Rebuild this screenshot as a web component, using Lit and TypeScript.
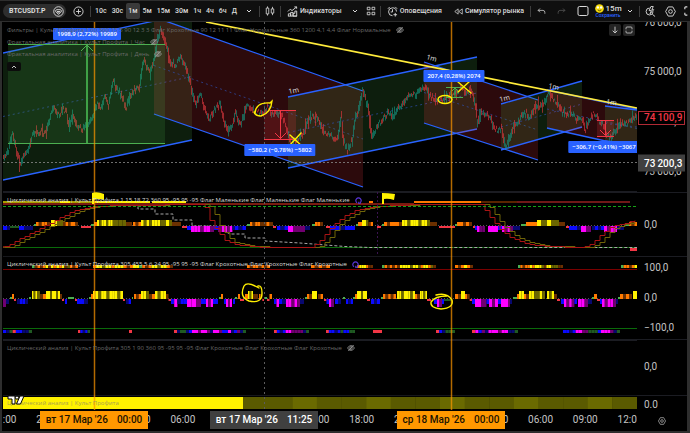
import { LitElement, html, css, svg, nothing } from "lit";
import { customElement } from "lit/decorators.js";

/* ---------- plot space: x 3..637, y 22..410 ---------- */
const X0 = 3, Y0 = 22, W = 634, H = 388;
const left = (x: number) => `${((x - X0) / W) * 100}%`;
const top = (y: number) => `${((y - Y0) / H) * 100}%`;

type Pt = [number, number];

const COLORS: Record<string, string> = {
  y: "#fff200", l: "#6b6600", o: "#ff7a00", w: "#6b3000", g: "#4caf50", d: "#1f5a22",
  r: "#f23645", b: "#0a0aff", n: "#080870", m: "#ff00ff", p: "#700070",
};

const PRICE: Pt[] = [[3,158],[8,150],[12,134],[16,150],[20,165],[23,156],[27,153],[32,135],[36,132],[42,132],[46,134],[50,115],[54,108],[58,115],[62,110],[66,110],[68,125],[73,115],[77,126],[82,130],[88,124],[93,115],[97,103],[101,108],[104,95],[108,105],[113,82],[117,90],[121,95],[126,108],[130,95],[134,90],[139,88],[143,60],[146,66],[150,72],[154,60],[157,40],[160,28],[163,35],[166,45],[170,62],[176,65],[180,57],[185,65],[189,80],[192,92],[195,105],[200,95],[205,110],[209,118],[215,108],[220,104],[224,125],[228,130],[232,125],[235,113],[240,125],[247,105],[250,106],[255,112],[263,113],[267,107],[273,115],[280,112],[285,125],[290,140],[296,140],[302,135],[307,122],[313,115],[318,120],[322,130],[330,135],[337,140],[341,117],[343,140],[347,150],[352,140],[355,118],[358,110],[362,90],[367,105],[372,138],[377,125],[382,120],[388,112],[393,115],[397,108],[403,104],[408,95],[415,95],[420,88],[425,87],[430,96],[435,100],[443,100],[450,94],[456,92],[462,87],[466,94],[470,90],[473,98],[476,112],[477,125],[481,112],[486,114],[490,116],[493,128],[497,130],[501,128],[503,140],[505,148],[510,138],[513,125],[517,125],[522,115],[526,113],[530,118],[533,110],[537,105],[542,108],[546,97],[549,94],[553,100],[557,102],[562,112],[567,114],[572,113],[577,120],[582,118],[585,130],[588,120],[593,114],[598,120],[603,125],[606,135],[611,138],[615,130],[620,122],[625,125],[630,120],[636,117]];

const RED_WAVE: Pt[] = [[3,247],[8,245],[20,238],[40,228],[60,217],[75,210],[93,206],[120,205],[200,204],[206,208],[210,220],[218,232],[226,241],[240,245],[265,247],[312,247],[322,238],[332,225],[345,215],[358,209],[375,206],[420,204],[480,204],[487,212],[492,220],[500,229],[510,237],[525,243],[545,246],[583,247],[592,243],[600,235],[608,228],[618,224],[637,220]];

function at(points: Pt[], x: number): number {
  if (x <= points[0][0]) return points[0][1];
  for (let i = 1; i < points.length; i++) {
    const [x1, y1] = points[i];
    if (x <= x1) {
      const [x0, y0] = points[i - 1];
      return y0 + ((y1 - y0) * (x - x0)) / (x1 - x0);
    }
  }
  return points[points.length - 1][1];
}

function noise(n: number): number {
  const v = Math.sin(n * 127.1 + 11.7) * 43758.5453;
  return v - Math.floor(v);
}

/* Wicks of the falling and of the rising candles, one path for each. */
function candles(rising: boolean): string {
  let d = "";
  for (let x = 3; x < 637; x++) {
    const trend = at(PRICE, x + 1) - at(PRICE, x - 1);
    const up = noise(x) > 0.5 + trend * 0.04;
    if (up !== rising) continue;
    const mid = at(PRICE, x) + (noise(x * 3) - 0.5) * 5;
    const half = 0.8 + noise(x * 7) * 2 + Math.abs(trend) * 0.25 + (noise(x * 5) > 0.94 ? 4 : 0);
    d += `M${x + 0.5} ${(mid - half).toFixed(1)}V${(mid + half).toFixed(1)}`;
  }
  return d;
}

function stairs(points: Pt[], lag: number): string {
  let d = `M3 ${at(points, 3 - lag)}`;
  for (let x = 5; x <= 637; x += 5) d += `H${x}V${Math.round(at(points, x - lag)) + 0.5}`;
  return d;
}

type Band = [number, number, string];

const FAST: Band[] = [[3,7,"b"],[7,10,"n"],[10,19,"d"],[19,24,"b"],[24,33,"n"],[34,36,"g"],[36,50,"owoow"],[51,59,"yyyl"],[59,63,"l"],[63,78,"wowoow"],[81,91,"r"],[91,94,"g"],[94,97,"o"],[97,115,"ylyylyyl"],[115,126,"lll"],[126,132,"w"],[133,141,"owo"],[141,163,"ylylyyyl"],[163,172,"lyl"],[172,181,"www"],[182,187,"r"],[187,191,"b"],[191,210,"mmmpmm"],[210,222,"pbp"],[222,235,"mmpmn"],[235,246,"bnb"],[247,250,"g"],[250,263,"owoow"],[263,273,"wow"],[273,276,"r"],[277,288,"bnb"],[288,293,"m"],[293,305,"p"],[305,310,"n"],[312,315,"g"],[315,323,"oow"],[326,330,"r"],[330,355,"bbnbb"],[356,358,"g"],[358,362,"o"],[362,366,"y"],[366,373,"lwo"],[377,381,"r"],[382,384,"g"],[384,402,"owooow"],[402,427,"yylyyylyy"],[427,430,"l"],[430,437,"w"],[439,455,"r"],[455,457,"g"],[457,472,"oowow"],[473,475,"r"],[475,477,"b"],[477,485,"mpp"],[488,498,"m"],[498,502,"b"],[502,513,"mpmp"],[513,520,"n"],[521,526,"g"],[526,537,"o"],[537,541,"y"],[541,547,"l"],[547,551,"y"],[551,559,"l"],[559,565,"w"],[566,569,"r"],[569,581,"bbn"],[581,586,"m"],[586,591,"p"],[592,604,"nbnb"],[604,617,"mpmm"],[617,624,"n"],[625,629,"g"],[629,637,"owo"]];

const SLOW: Band[] = [[3,9,"pn"],[10,12,"g"],[12,16,"or"],[17,28,"nbbn"],[29,31,"g"],[32,37,"yly"],[37,46,"lwo"],[46,60,"yylyyly"],[60,64,"wr"],[65,67,"b"],[68,74,"g"],[75,77,"r"],[77,84,"b"],[84,88,"n"],[89,91,"g"],[91,93,"o"],[93,123,"yylyylyyyly"],[123,125,"r"],[126,131,"nb"],[132,133,"g"],[134,141,"owo"],[141,149,"yyl"],[149,155,"wo"],[155,166,"ylyy"],[166,171,"wr"],[171,187,"bmnbb"],[187,196,"mm"],[196,201,"p"],[201,206,"b"],[206,213,"mpm"],[213,218,"b"],[219,221,"g"],[221,223,"o"],[224,232,"bmpm"],[233,235,"b"],[235,237,"g"],[238,240,"o"],[240,244,"r"],[245,248,"o"],[248,253,"yly"],[253,258,"w"],[259,264,"owr"],[265,267,"g"],[267,272,"ro"],[274,279,"bm"],[279,286,"bn"],[286,300,"mmpmp"],[300,304,"n"],[305,307,"g"],[307,312,"ow"],[312,317,"y"],[318,323,"wo"],[324,329,"rb"],[329,334,"mp"],[335,341,"bn"],[343,345,"g"],[346,353,"bnb"],[353,355,"g"],[355,357,"o"],[357,367,"yylyy"],[367,370,"r"],[371,380,"bnb"],[381,383,"g"],[383,396,"owowo"],[397,415,"yylyyyly"],[415,420,"ow"],[420,427,"yyly"],[427,431,"r"],[434,437,"b"],[437,442,"mp"],[442,444,"b"],[444,452,"d"],[455,461,"ow"],[461,465,"y"],[465,472,"owr"],[472,484,"bmmp"],[484,489,"pb"],[489,498,"mpm"],[498,501,"b"],[501,508,"m"],[508,512,"pn"],[513,517,"g"],[517,519,"o"],[519,529,"yyow"],[529,545,"yyllyl"],[547,554,"yly"],[554,560,"wr"],[561,564,"b"],[564,577,"mpmpb"],[578,588,"mmp"],[588,592,"n"],[592,594,"g"],[594,597,"o"],[597,600,"r"],[600,602,"b"],[602,616,"mpmmp"],[616,618,"n"],[618,620,"g"],[620,632,"owow"],[633,637,"y"]];

const HIGH: Band[] = [[32,78,"gwowoywyoyoywlowo"],[93,173,"oyylyyoyyyowoyygowoyylyyow"],[247,270,"owoowowo"],[311,330,"owowo"],[357,373,"oyyyoww"],[382,436,"gowowowyyyylyyloyyolw"],[455,473,"owoyow"],[518,563,"gowooyoyyylwyylllww"],[621,637,"goowoy"]];
const LOW: Band[] = [[3,32,"bndrbbnnd"],[78,90,"rbnbd"],[129,132,"r"],[174,246,"rnddnbmmpmmpnmmpbbmnbpnd"],[274,309,"rbnbmmppppnd"],[326,355,"rbbnbdbbdd"],[373,382,"r"],[436,455,"rbnddd"],[472,518,"rmbpnmmmpmmnnd"],[563,620,"bbnbmmppdddbmmmpnd"]];

const STEP: Record<string, number> = { y: 3, l: 3, o: 2, w: 2, g: 1, d: -1, r: -1, b: -2, n: -2, m: -3, p: -3 };

function bars(bands: Band[], base: number, size: (code: string) => number) {
  return bands.map(([a, b, codes]) =>
    [...codes].map((c, i) => {
      const w = (b - a) / codes.length;
      const h = size(c);
      return svg`<rect x=${a + i * w} y=${h > 0 ? base - h : base} width=${w} height=${Math.abs(h)} fill=${COLORS[c]}></rect>`;
    }));
}

/* x from, x to, upper y at both ends, lower y at both ends */
const CHANNELS: [number, number, number, number, number, number, string][] = [
  [3, 192, 53, 13, 180, 140, "up"],
  [154, 363, 17, 91, 114, 187, "down"],
  [288, 477, 97, 57, 168, 129, "up"],
  [424, 538, 62, 100, 123, 160, "down"],
  [501, 582, 104, 81, 150, 127, "up"],
  [547, 637, 90, 109, 128, 148, "down"],
  [605, 637, 106, 110, 141, 144, "up"],
];

const MARKS: [number, number, number][] = [[289, 94, -12], [426, 59, 16], [500, 102, -14], [548, 88, 12], [606, 104, 8]];

const BADGES = [
  { x: 87, y: 34, text: "1998,9 (2,72%) 19989" },
  { x: 280, y: 150, text: "−580,2 (−0,78%) −5802" },
  { x: 454, y: 76, text: "207,4 (0,28%) 2074" },
  { x: 604, y: 147, text: "−306,7 (−0,41%) −3067" },
];

const HOURS = ["18:00", "21:00", "00:00", "03:00", "06:00", "09:00", "12:00", "15:00", "18:00", "21:00", "00:00", "03:00", "06:00", "09:00", "12:00"];
const DATES = [
  { x: 94, day: "вт 17 Мар '26", time: "00:00", kind: "event" },
  { x: 264, day: "вт 17 Мар '26", time: "11:25", kind: "cursor" },
  { x: 451, day: "ср 18 Мар '26", time: "00:00", kind: "event" },
];

const PRICES: [number, string][] = [[23, "76\u2009000,0"], [72, "75\u2009000,0"], [122, "74\u2009000,0"], [172, "73\u2009000,0"]];
const LEVELS: [number, string][] = [[225, "0,0"], [268, "100,0"], [298, "0,0"], [328, "−100,0"], [367, "0,0"], [405, "0.0"]];

const TIMEFRAMES = ["10с", "30с", "1м", "5м", "15м", "30м", "1ч", "4ч", "6ч", "Д"];

/* ---------- icons ---------- */
const icon = (w: number, body: unknown) => html`<svg class="icon" width=${w} height=${w} viewBox="0 0 12 12" aria-hidden="true">${body}</svg>`;
const ICONS = {
  gem: icon(11, svg`<circle cx="6" cy="6" r="5.2"></circle><path d="M3.8 4h4.4l1.2 1.6L6 9.2 2.6 5.6z"></path><path d="M4.4 6h3.2L6 7.6z"></path>`),
  plus: icon(11, svg`<circle cx="6" cy="6" r="5"></circle><path d="M6 3.4v5.2M3.4 6h5.2"></path>`),
  chevron: icon(6, svg`<path stroke-width="2" d="M2 4l4 4 4-4"></path>`),
  candles: icon(10, svg`<path d="M3 .5v2M3 9.5v2M1.5 2.5h3v7h-3zM9 1v2.5M9 8.5V11M7.5 3.5h3v5h-3z"></path>`),
  indicators: icon(11, svg`<path d="M1 6l2.5-2.5 2 1.5 5-4M8 1h2.5v2M1.5 11V8.5H4V11M4 11V7h2.6v4M6.6 11V8h2V5.5h2V11zM1 11h10"></path>`),
  grid: icon(10, svg`<path d="M1.5 1.5h3.3v3H1.5zM7.2 1.5h3.3v3H7.2zM1.5 7.5h3.3v3H1.5zM7.2 7.5h3.3v3H7.2z"></path>`),
  alarm: icon(11, svg`<path d="M10.3 6A4.3 4.3 0 1 0 6 10.6M6 3.5v3H4M1 3l2-2M9 1l2 2M9 7.5v4M7 9.5h4"></path>`),
  rewind: icon(9, svg`<path d="M5.5 2.5v7L1 6zM11 2.5v7L6.5 6z"></path>`),
  undo: icon(9, svg`<path d="M4 2L1.5 4.5 4 7M1.5 4.5H8q2.5 0 2.5 3V9"></path>`),
  redo: icon(9, svg`<path d="M8 2l2.5 2.5L8 7M10.5 4.5H4q-2.5 0-2.5 3V9"></path>`),
  frame: icon(12, svg`<rect x="1" y="1.5" width="10" height="9" rx="1.5"></rect>`),
  search: icon(11, svg`<path d="M5 2.2A3.8 3.8 0 1 0 8.8 6M8 9l3 2.5M6.5.5l-2 4.5H7L5.5 8.500 9.500 4h-2L9 .5z"></path>`),
  hex: icon(11, svg`<path d="M3.5 1h5l2.8 5-2.8 5h-5L.7 6z"></path><circle cx="6" cy="6" r="2"></circle>`),
  full: icon(10, svg`<path stroke-width="1.4" d="M1 4V2q0-1 1-1h2M8 1h2q1 0 1 1v2M11 8v2q0 1-1 1H8M4 11H2q-1 0-1-1V8"></path>`),
  eye: icon(8, svg`<path stroke-width="1.3" d="M.7 6Q6-1 11.3 6 6 13 .7 6zM2 10.5l8-9"></path><circle cx="6" cy="6" r="2"></circle>`),
  sync: icon(7, svg`<path stroke-width="2" d="M3.5 10a4.6 4.6 0 1 1 5 0M6.5 8v3.5H10"></path>`),
  down: icon(8, svg`<path stroke-width="1.5" d="M6 1v9M2.5 7L6 10.5 9.500 7"></path>`),
  expand: icon(8, svg`<path stroke-width="1.3" d="M1.5 5V3q0-1.5 1.5-1.5h6q1.5 0 1.5 1.5v2M1.5 7v2q0 1.5 1.5 1.5h6q1.5 0 1.5-1.5V7"></path>`),
  up: icon(6, svg`<path stroke-width="2" d="M2 8l4-4 4 4"></path>`),
};

@customElement("trade-toolbar")
export class TradeToolbar extends LitElement {
  static styles = css`
    :host { display: flex; align-items: center; justify-content: space-between; height: 20px; background: #0f0f0f; color: #dbdbdb; overflow: hidden; }
    .group { display: flex; align-items: center; flex: none; }
    .right { margin-right: -4px; }
    button { display: inline-flex; align-items: center; justify-content: center; gap: 2px; margin: 0; padding: 0; border: 0; background: none; color: inherit; font: 500 7px/16px Roboto, "Noto Sans", sans-serif; white-space: nowrap; }
    .icon { display: block; flex: none; fill: none; stroke: currentColor; stroke-width: 1; }
    .symbol { width: 63px; height: 14px; margin-left: 3px; padding: 0 2px 0 6px; box-sizing: border-box; border-radius: 7px; background: #2e2e2e; justify-content: space-between; font-weight: 700; }
    .wide { width: 24px; }
    .square { width: 20px; }
    .tight { width: 18px; }
    .narrow { width: 14px; }
    .sep { width: 1px; height: 11px; background: #3d3d3d; }
    .frames { display: flex; gap: 1px; margin-left: 2px; }
    .frames button { padding: 0 2px; border-radius: 2px; }
    .frames .on { background: #3a3a3a; }
    .label { padding: 0 6px; }
    .dim { color: #5a5a5a; }
    .face { width: 9px; height: 9px; }
    .layout { display: grid; grid-template-columns: auto auto; justify-content: center; align-items: center; gap: 0 2px; width: 26px; font-size: 8px; line-height: 9px; }
    .save { grid-column: 1 / -1; font-size: 5px; line-height: 5px; color: #2962ff; }
  `;

  render() {
    return html`
      <div class="group">
        <button class="symbol"><span>BTCUSDT.P</span>${ICONS.gem}</button>
        <button class="wide" aria-label="Добавить">${ICONS.plus}</button>
        <span class="sep"></span>
        <div class="frames">${TIMEFRAMES.map((t) => html`<button class=${t === "1м" ? "on" : ""}>${t}</button>`)}</div>
        <button class="square" aria-label="Интервалы">${ICONS.chevron}</button>
        <span class="sep"></span>
        <button class="square" aria-label="Свечи">${ICONS.candles}</button>
        <span class="sep"></span>
        <button class="label">${ICONS.indicators}<span>Индикаторы</span></button>
        <button class="narrow" aria-label="Избранные индикаторы">${ICONS.chevron}</button>
        <button class="tight" aria-label="Шаблоны">${ICONS.grid}</button>
        <span class="sep"></span>
        <button class="label">${ICONS.alarm}<span>Оповещения</span></button>
        <button class="label">${ICONS.rewind}<span>Симулятор рынка</span></button>
      </div>
      <div class="group right">
        <span class="sep"></span>
        <button class="square" aria-label="Отменить">${ICONS.undo}</button>
        <button class="square dim" aria-label="Повторить">${ICONS.redo}</button>
        <button class="wide" aria-label="Макет">${ICONS.frame}</button>
        <button class="layout">
          <svg class="face" viewBox="0 0 10 10" aria-hidden="true"><circle cx="5" cy="5" r="4.8" fill="#f5d90a"></circle><circle cx="3.2" cy="3.8" r="1.3" fill="#fff"></circle><circle cx="6.8" cy="3.8" r="1.3" fill="#fff"></circle><path d="M3 6.5q2 2 4 0" stroke="#5a4a00" fill="none"></path></svg>
          <span>15m</span><span class="save">Сохранить</span>
        </button>
        <button class="tight" aria-label="Список макетов">${ICONS.chevron}</button>
        <span class="sep"></span>
        <button class="square" aria-label="Быстрый поиск">${ICONS.search}</button>
        <button class="square" aria-label="Настройки">${ICONS.hex}</button>
        <button class="tight" aria-label="Во весь экран">${ICONS.full}</button>
      </div>`;
  }
}

@customElement("trade-plot")
export class TradePlot extends LitElement {
  static styles = css`
    :host { display: block; position: relative; overflow: hidden; }
    .canvas { display: block; width: 100%; height: 100%; }
    .up { fill: #4caf50; fill-opacity: 0.17; }
    .down { fill: #f23645; fill-opacity: 0.18; }
    .edge { stroke: #2962ff; stroke-width: 1.3; }
    .mid { stroke: #2f4fae; stroke-width: 1; stroke-dasharray: 2 3; opacity: 0.7; }
    .line { fill: none; stroke-width: 1; }
    .thick { fill: none; stroke-width: 2; }
    .rise { stroke: #17937f; stroke-width: 0.8; opacity: 0.8; }
    .fall { stroke: #e0383f; stroke-width: 0.8; opacity: 0.8; }
    .session { stroke: #ff9800; stroke-width: 1.5; opacity: 0.7; }
    .cross { stroke: #8a8a8a; stroke-dasharray: 2 2; opacity: 0.8; }
    .cross-v { stroke: #5c5c5c; stroke-dasharray: 2 3; }
    .pen { fill: none; stroke: #ffee00; stroke-width: 1.4; stroke-linecap: round; }
    .mark { fill: #e0e0e0; font: 7px "Open Sans", "Noto Sans", sans-serif; }
    .badge { position: absolute; transform: translate(-50%, -50%); padding: 0 4px; border-radius: 1px; background: #2962ff; color: #fff; font: 600 6px/12px "Open Sans", "Noto Sans", sans-serif; white-space: nowrap; }
  `;

  private channels() {
    return CHANNELS.map(([a, b, u0, u1, l0, l1, kind]) => svg`
      <path class=${kind} d="M${a} ${u0}L${b} ${u1}V${l1}L${a} ${l0}z"></path>
      <path class="mid" d="M${a} ${(u0 + l0) / 2}L${b} ${(u1 + l1) / 2}"></path>
      <path class="edge" d="M${a} ${u0}L${b} ${u1}M${a} ${l0}L${b} ${l1}"></path>`);
  }

  private measures() {
    return svg`
      <rect class="up" x="8" y="44" width="157" height="100"></rect>
      <path class="line" stroke="#4caf50" d="M8 44.5H165M8 143.5H165"></path>
      <path class="thick" stroke="#3fa046" d="M87 45V143"></path>
      <path class="line" stroke="#4caf50" d="M81 51L87 45 93 51"></path>
      <rect class="down" x="264" y="110" width="32" height="29"></rect>
      <path class="line" stroke="#f23645" d="M270 110.5H296M264 139.5H296M280.5 110V139M275 133L280.5 138.5 286 133"></path>
      <path class="line" stroke="#4caf50" d="M446 87.5H463M446 97.5H463M455 88V97M452 91L455 88 458 91"></path>
      <rect class="down" x="597" y="121" width="17" height="15"></rect>
      <path class="line" stroke="#f23645" d="M597 120.5H614M597 136.5H614M605.5 121V135M600 130L605.5 135.5 611 130"></path>`;
  }

  private oscillators() {
    return svg`
      <path class="thick" stroke="#1b1c22" d="M3 192H637M3 340H637"></path>
      <path class="line" stroke="#16171b" d="M3 256.5H637M3 395.5H637"></path>
      <path class="thick" stroke="#7a1c10" d="M3 204H414"></path>
      <path class="thick" stroke="#a8a000" d="M3 202H92"></path>
      <path class="thick" stroke="#fff200" d="M60 202H70M94 202H150M152 202H186"></path>
      <path class="thick" stroke="#ff7a00" d="M369 202H373M414 202H481"></path>
      <path class="thick" stroke="#5a2400" d="M481 202H517"></path>
      <path class="thick" stroke="#701818" d="M517 202H630"></path>
      <path class="line" stroke="#555" stroke-dasharray="1 2" d="M3 225.5H637M3 298.5H637"></path>
      <path class="line" stroke="#0a6a0a" d="M3 247.5H637"></path>
      <path class="line" stroke="#a8a8a8" stroke-dasharray="3 2" d="M93 206.5H138V209H155V214H173V220H192V226H215L230 234H245V238H265V241L300 243 345 246.5 370 247.5H637"></path>
      ${bars(FAST, 226, (c) => (STEP[c] > 2 ? 6 : STEP[c] > 1 ? 4 : STEP[c] < -2 ? -6 : STEP[c] < -1 ? -4 : STEP[c] * 2))}
      <rect x="630" y="248" width="7" height="3" fill="#f23645"></rect>
      <path class="line" stroke="#6f6408" d=${stairs(RED_WAVE, 7)}></path>
      <path class="line" stroke="#a81414" d=${stairs(RED_WAVE, 0)}></path>
      <path class="line" stroke="#16a016" stroke-dasharray="3 2" d="M3 206.5H637"></path>
      ${bars(HIGH, 268, () => 3)}
      <path class="line" stroke="#7a0000" d="M3 269.5H637"></path>
      ${bars(SLOW, 299, (c) => (STEP[c] > 2 ? 8 : STEP[c] > 1 ? 5 : STEP[c] < -2 ? -8 : STEP[c] < -1 ? -5 : STEP[c] * 2))}
      <path class="line" stroke="#0a6a0a" d="M3 328.5H637"></path>
      ${bars(LOW, 330, () => -3)}
      <rect x="3" y="397" width="240" height="12" fill="#fff200"></rect>
      ${Array.from({ length: 16 }, (_, i) => svg`<rect x=${243 + i * 24.625} y="397" width="25" height="12" fill=${i % 3 === 2 ? "#6a6a00" : "#5a5a00"}></rect>`)}`;
  }

  render() {
    return html`
      <svg class="canvas" viewBox="${X0} ${Y0} ${W} ${H}" preserveAspectRatio="none" aria-label="График BTCUSDT.P">
        ${this.channels()}
        ${this.oscillators()}
        <path class="rise" d=${candles(true)}></path>
        <path class="fall" d=${candles(false)}></path>
        ${this.measures()}
        <path d="M206 22L637 108" stroke="#ffeb3b" stroke-width="1.7"></path>
        <path class="cross" d="M3 162.5H637"></path>
        <path class="cross-v" d="M264.5 22V410"></path>
        <path d="M377.5 192V256" stroke="#3a1450" stroke-dasharray="2 2"></path>
        <path class="session" d="M94.5 22V410M451.5 22V410"></path>
        <path fill="#fff200" d="M92 193q5-2 12 1v6q-6-2-10 0v4h-2zM382 193q6 0 13 1l-1 6q-6-2-10-1v5h-2z"></path>
        <path class="pen" d="M255 113Q256 102 270 103L272 101Q271 113 261 116 255 116 254 112M290 135L303 147M301 133L289 146M458 82L471 93M470 81L458 92"></path>
        <ellipse class="pen" cx="445" cy="99.5" rx="7" ry="4"></ellipse>
        <path class="pen" d="M259 288Q247 281 244 286 239 297 249 301 262 304 262 293 262 285 258 286"></path>
        <path class="pen" d="M436 295Q447 292 452 300 454 308 441 309 430 308 431 302 435 296 447 296"></path>
        ${MARKS.map(([x, y, r]) => svg`<text class="mark" transform="translate(${x} ${y}) rotate(${r})">1m</text>`)}
      </svg>
      ${BADGES.map((b) => html`<span class="badge" style="left:${left(b.x)};top:${top(b.y)}">${b.text}</span>`)}`;
  }
}

@customElement("app-root")
export class AppRoot extends LitElement {
  static styles = css`
    :host { display: grid; grid-template-rows: 20px minmax(0, 1fr); gap: 1px; height: 100vh; box-sizing: border-box; padding: 1px 3px 2px 0; background: #2e2e2e; font-family: "Open Sans", "Noto Sans", sans-serif; color: #c4c4c4; overflow: hidden; }
    trade-toolbar { margin-right: -3px; }
    .chart { display: grid; margin-left: 2px; padding-left: 1px; grid-template-columns: minmax(0, 1fr) 50px; grid-template-rows: minmax(0, 170fr) minmax(0, 64fr) minmax(0, 84fr) minmax(0, 55fr) minmax(0, 15fr) 21px; background: #000; min-height: 0; }
    trade-plot { grid-area: 1 / 1 / 6 / 2; }
    .pane { grid-column: 1; position: relative; padding: 2px 4px; overflow: hidden; }
    .p1 { grid-row: 1; } .p2 { grid-row: 2; } .p3 { grid-row: 3; } .p4 { grid-row: 4; } .p5 { grid-row: 5; }
    .legend { display: flex; align-items: center; gap: 5px; height: 12px; font: 6px/12px "Open Sans", "Noto Sans", sans-serif; white-space: nowrap; color: #dcdcdc; }
    .off { color: #6a6a6a; }
    .bare { color: #a8a050; }
    .icon { display: block; flex: none; fill: none; stroke: currentColor; stroke-width: 1; }
    .eye { color: #a0a0a0; }
    .sync { color: #5a35d8; }
    button { margin: 0; padding: 0; border: 0; background: none; color: #c4c4c4; display: flex; align-items: center; justify-content: center; }
    .fold { width: 14px; height: 9px; margin-top: 2px; border-radius: 2px; background: #0c0c0c; }
    .tools { position: absolute; top: 2px; right: 2px; display: flex; gap: 2px; }
    .tools button { width: 12px; height: 12px; border-radius: 2px; background: #242424; }
    .logo { position: absolute; left: 4px; top: 0; width: 18px; height: 10px; fill: #fff; stroke: #000; stroke-width: 1; }
    .scale { grid-area: 1 / 2 / 6 / 3; position: relative; overflow: hidden; font: 10px/12px Roboto, "Noto Sans", sans-serif; }
    .tick { position: absolute; left: 7px; transform: translateY(-50%); }
    .tag { position: absolute; left: 1px; right: 2px; padding-left: 6px; box-sizing: border-box; transform: translateY(-50%); white-space: nowrap; font-weight: 500; }
    .last { border: 1px solid #b02a35; background: #000; color: #f23645; padding-left: 5px; line-height: 12px; }
    .cursor { background: #404040; color: #fff; }
    .tag.cursor { line-height: 17px; }
    .rule { position: absolute; left: 0; right: 0; height: 1px; background: #1b1c22; }
    .times { grid-area: 6 / 1; position: relative; overflow: hidden; font: 10px/20px Roboto, "Noto Sans", sans-serif; }
    .hour { position: absolute; transform: translateX(-50%); }
    .date { position: absolute; top: 1px; transform: translateX(-50%); display: flex; gap: 9px; justify-content: center; width: 108px; font-weight: 500; line-height: 18px; white-space: nowrap; }
    .event { background: #ff9800; color: #1a1200; }
    .corner { grid-area: 6 / 2; justify-content: center; }
  `;

  private legend(text: string, state: "on" | "off" | "bare") {
    const end = state === "bare" ? nothing : html`<span class=${state === "on" ? "sync" : "eye"}>${state === "on" ? ICONS.sync : ICONS.eye}</span>`;
    return html`<div class="legend ${state}"><span>${text}</span>${end}</div>`;
  }

  render() {
    return html`
      <trade-toolbar></trade-toolbar>
      <main class="chart">
        <trade-plot></trade-plot>
        <section class="pane p1">
          ${this.legend("Фильтры | Культ Профита 1 60 360 15 5 90 12 3 3 Флаг Крохотные 90 12 11 11 Флаг Нормальные 360 1200 4,1 4,4 Флаг Нормальные", "off")}
          ${this.legend("Фрактальная аналитика | Культ Профита | Час", "off")}
          ${this.legend("Фрактальная аналитика | Культ Профита | День", "off")}
          <button class="fold" aria-label="Свернуть">${ICONS.up}</button>
          <div class="tools"><button aria-label="Вниз">${ICONS.down}</button><button aria-label="Развернуть">${ICONS.expand}</button></div>
        </section>
        <section class="pane p2">${this.legend("Циклический анализ | Культ Профита 1 15 18 72 360 95 -95 95 -95 Флаг Маленькие Флаг Маленькие Флаг Маленькие", "on")}</section>
        <section class="pane p3">${this.legend("Циклический анализ | Культ Профита 305 455 5 6 24 95 -95 95 -95 Флаг Крохотные Флаг Крохотные Флаг Крохотные", "on")}</section>
        <section class="pane p4">${this.legend("Циклический анализ | Культ Профита 305 1 90 360 95 -95 95 -95 Флаг Крохотные Флаг Крохотные Флаг Крохотные", "off")}</section>
        <section class="pane p5">
          ${this.legend("Циклический анализ | Культ Профита", "bare")}
          <svg class="logo" viewBox="0 0 18 10" aria-label="TradingView"><path d="M1 1h7v8H5V4H1z"></path><circle cx="10" cy="2.6" r="1.6"></circle><path d="M13 1h4l-3.5 8h-4z"></path></svg>
        </section>
        <aside class="scale">
          ${[192, 256, 339, 395].map((y) => html`<span class="rule" style="top:${top(y)}"></span>`)}
          ${[...PRICES, ...LEVELS].map(([y, t]) => html`<span class="tick" style="top:${top(y)}">${t}</span>`)}
          <span class="tag last" style="top:${top(118)}">${"74\u2009100,9"}</span>
          <span class="tag cursor" style="top:${top(163)}">${"73\u2009200,3"}</span>
        </aside>
        <div class="times">
          ${HOURS.map((t, i) => html`<span class="hour" style="left:${left(4 + i * 44.714)}">${t}</span>`)}
          ${DATES.map((d) => html`<span class="date ${d.kind}" style="left:${left(d.x)}"><span>${d.day}</span><span>${d.time}</span></span>`)}
        </div>
        <button class="corner" aria-label="Настройки шкалы">${icon(8, svg`<path d="M3.5 1h5l2.8 5-2.8 5h-5L.7 6z"></path><circle cx="6" cy="6" r="2"></circle>`)}</button>
      </main>`;
  }
}
